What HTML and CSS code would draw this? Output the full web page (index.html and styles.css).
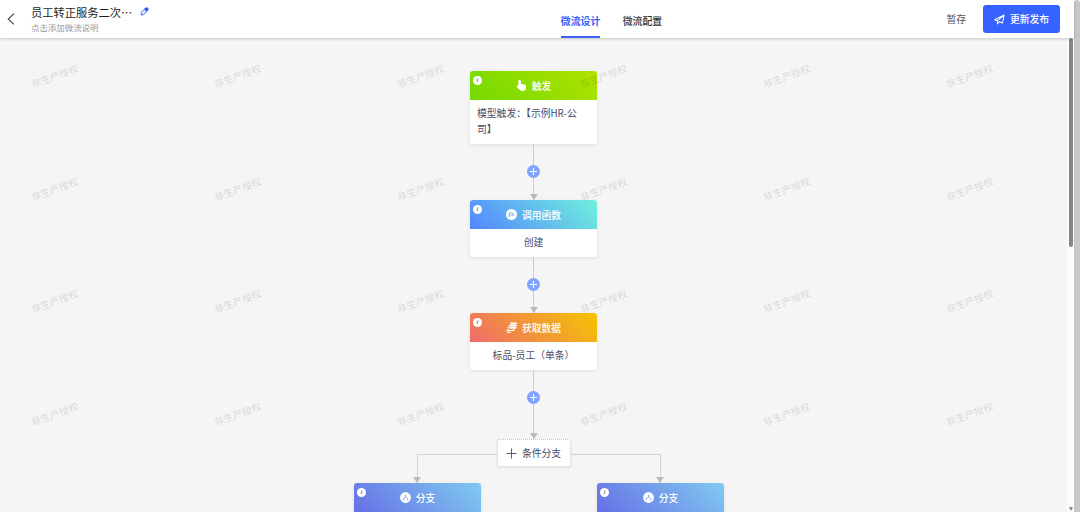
FILE: index.html
```html
<!DOCTYPE html>
<html lang="zh-CN">

<head>
    <meta charset="UTF-8">
    <meta name="viewport" content="width=device-width, initial-scale=1.0">
    <title>微流设计</title>
    <link rel="stylesheet" href="styles.css">
</head>

<body>
    <div class="app">
        <header class="header">
            <div class="header-left">
                <svg class="back" viewBox="0 0 8 12"><path d="M7 .7 1.2 6 7 11.3" /></svg>
                <div class="title-box">
                    <div class="title">
                        <span>员工转正服务二次⋯</span>
                        <svg class="edit" viewBox="0 0 10 10">
                            <path class="edit-body" d="M5.6 1.8 8.2 4.4 4.1 8.4 1.3 9 1.5 6Z" />
                            <path class="edit-tip" d="M4.6 2.2 7 .4Q7.5 0 8 .4L9.5 1.9Q10 2.4 9.5 3L7.2 5.6Z" />
                        </svg>
                    </div>
                    <div class="subtitle">点击添加微流说明</div>
                </div>
            </div>
            <nav class="tabs">
                <a class="tab active">微流设计</a>
                <a class="tab">微流配置</a>
            </nav>
            <div class="header-right">
                <span class="save">暂存</span>
                <button class="publish">
                    <svg class="plane" viewBox="0 0 12 12">
                        <path d="M11 1 .9 6.2 3.7 7.6 11 1 9.3 9.8 6 8.4M3.7 7.6V10.8L6 8.4" />
                    </svg>
                    <span>更新发布</span>
                </button>
            </div>
        </header>

        <div class="main">
            <div class="canvas">
                <div class="flow">
                    <div class="node">
                        <div class="node-head trigger">
                            <span class="info">i</span>
                            <svg class="node-icon" viewBox="0 0 12 12">
                                <path d="M2.6 1.6Q2.6 0 4 0T5.4 1.6V4.2L9.7 5.1Q11.3 5.6 11 7.2L10.4 10.3Q10 11.8 8.5 11.8H5.8Q4.8 11.8 4.2 11L.8 7.6Q.4 6.7 1.2 6.2 1.9 5.9 2.6 6.4Z" />
                            </svg>
                            <span>触发</span>
                        </div>
                        <div class="node-body text-left">模型触发：【示例HR-公司】</div>
                    </div>
                    <div class="connector"><span class="add"></span></div>
                    <div class="node">
                        <div class="node-head func">
                            <span class="info">i</span>
                            <span class="round-icon">fx</span>
                            <span>调用函数</span>
                        </div>
                        <div class="node-body">创建</div>
                    </div>
                    <div class="connector"><span class="add"></span></div>
                    <div class="node">
                        <div class="node-head data">
                            <span class="info">i</span>
                            <svg class="node-icon" viewBox="0 0 12 12">
                                <path d="M4.6 .6H11.8L11.2 7.4H4Z" />
                                <path class="cut" d="M4 2.8H11.6M3.8 5.1H11.4" />
                                <path class="pointer" d="M4.4 4H2.6M4 6.2H1.6M8.6 7.2V9.4H.4M3 7.8 1 9.6M1 11.3H5.4" />
                            </svg>
                            <span>获取数据</span>
                        </div>
                        <div class="node-body">标品-员工（单条）</div>
                    </div>
                    <div class="connector long"><span class="add"></span></div>
                </div>

                <div class="branch-row">
                    <div class="arm arm-left"></div>
                    <div class="branch-btn">
                        <svg class="plus" viewBox="0 0 11 11"><path d="M5.5 .5V10.5M.5 5.5H10.5" /></svg>
                        <span>条件分支</span>
                    </div>
                    <div class="arm arm-right"></div>
                </div>

                <div class="branches">
                    <div class="node">
                        <div class="node-head branch">
                            <span class="info">i</span>
                            <svg class="node-icon" viewBox="0 0 12 12">
                                <circle cx="6" cy="6" r="5.9" />
                                <path class="fork" d="M6 3V5.5M3.7 8.2V7L6 5.2 8.3 7V8.2M3 8.5H4.5M7.5 8.5H9" />
                            </svg>
                            <span>分支</span>
                        </div>
                    </div>
                    <div class="node">
                        <div class="node-head branch">
                            <span class="info">i</span>
                            <svg class="node-icon" viewBox="0 0 12 12">
                                <circle cx="6" cy="6" r="5.9" />
                                <path class="fork" d="M6 3V5.5M3.7 8.2V7L6 5.2 8.3 7V8.2M3 8.5H4.5M7.5 8.5H9" />
                            </svg>
                            <span>分支</span>
                        </div>
                    </div>
                </div>

                <div class="watermark">
                    <span>非生产授权</span><span>非生产授权</span><span>非生产授权</span><span>非生产授权</span><span>非生产授权</span><span>非生产授权</span>
                    <span>非生产授权</span><span>非生产授权</span><span>非生产授权</span><span>非生产授权</span><span>非生产授权</span><span>非生产授权</span>
                    <span>非生产授权</span><span>非生产授权</span><span>非生产授权</span><span>非生产授权</span><span>非生产授权</span><span>非生产授权</span>
                    <span>非生产授权</span><span>非生产授权</span><span>非生产授权</span><span>非生产授权</span><span>非生产授权</span><span>非生产授权</span>
                </div>
            </div>
            <div class="scrollbar">
                <div class="thumb"></div>
                <div class="scroll-down"></div>
            </div>
        </div>
    </div>
    <div class="page-scrollbar"></div>
</body>

</html>
```

FILE: styles.css
```css
* {
    box-sizing: border-box;
}

body {
    display: flex;
    height: 100vh;
    margin: 0;
    overflow: hidden;
    font-family: "Noto Sans CJK SC", sans-serif;
    font-size: 9.8px;
    color: #484b68;
    background-color: #fff;
}

svg {
    display: block;
    flex: none;
}

.app {
    flex: 1;
    display: flex;
    flex-direction: column;
    min-width: 0;
}

/* header */
.header {
    position: relative;
    z-index: 2;
    flex: none;
    display: grid;
    grid-template-columns: 1fr auto 1fr;
    height: 38px;
    padding-right: 14px;
    background-color: #fff;
    box-shadow: 0 1px 3px rgba(0, 0, 0, 0.2);
}

.header-left {
    display: flex;
    align-items: center;
    gap: 16px;
    padding-left: 7px;
}

.back {
    width: 8px;
    height: 12px;
    fill: none;
    stroke: #444;
    stroke-width: 1.1;
}

.title-box {
    padding-bottom: 1px;
}

.title {
    display: flex;
    align-items: center;
    gap: 8px;
    font-size: 11.25px;
    line-height: 16px;
    color: #1d1d1d;
}

.edit {
    width: 9px;
    height: 9px;
}

.edit-body {
    fill: #dfe6ff;
    stroke: #3a5cf5;
    stroke-width: 1;
}

.edit-tip {
    fill: #3a5cf5;
}

.subtitle {
    font-size: 8.45px;
    line-height: 14px;
    color: #999;
}

.tabs {
    display: flex;
    gap: 22.5px;
    padding-left: 163px;
}

.tab {
    height: 38px;
    padding-top: 14px;
    font-size: 9.85px;
    font-weight: 500;
    line-height: 15px;
    color: #333;
}

.tab.active {
    color: #3a62fa;
    font-weight: 700;
    border-bottom: 2px solid #3a62fa;
}

.header-right {
    display: flex;
    align-items: center;
    justify-content: flex-end;
    gap: 17px;
}

.save {
    color: #555;
}

.publish {
    display: flex;
    align-items: center;
    justify-content: center;
    gap: 5px;
    width: 77px;
    height: 28px;
    padding: 0;
    border: none;
    border-radius: 3px;
    background-color: #3662ff;
    color: #fff;
    font-family: inherit;
    font-size: 9.8px;
    font-weight: 500;
}

.plane {
    width: 11px;
    height: 11px;
    fill: none;
    stroke: #fff;
    stroke-width: 1.1;
    stroke-linejoin: round;
}

/* canvas */
.main {
    flex: 1;
    display: flex;
    min-height: 0;
}

.canvas {
    position: relative;
    flex: none;
    width: 1067px;
    padding-top: 33px;
    overflow: hidden;
    background-color: #f5f5f5;
}

.flow {
    display: flex;
    flex-direction: column;
    align-items: center;
}

.node {
    flex: none;
    width: 127px;
    border-radius: 3px;
    background-color: #fff;
    box-shadow: 0 1px 4px rgba(0, 0, 0, 0.09);
}

.node-head {
    position: relative;
    display: flex;
    align-items: center;
    justify-content: center;
    gap: 5px;
    height: 29px;
    border-radius: 3px 3px 0 0;
    color: #fff;
    font-weight: 500;
}

.trigger {
    background: linear-gradient(45deg, #74d900, #b0e200);
}

.func {
    background: linear-gradient(45deg, #5486ff, #6ff0dc);
}

.data {
    background: linear-gradient(45deg, #ee6c6c, #f5c400);
}

.branch {
    background: linear-gradient(45deg, #6670e6, #80caf0);
}

.info {
    position: absolute;
    top: 5px;
    left: 3px;
    width: 9px;
    height: 9px;
    border-radius: 50%;
    background-color: #fff;
    color: #888;
    font: italic bold 7px/9px "Liberation Serif", serif;
    text-align: center;
}

.node-icon {
    width: 11px;
    height: 11px;
    fill: #fff;
}

.node-icon .cut {
    fill: none;
    stroke: #f0924a;
    stroke-width: 0.5;
}

.node-icon .pointer {
    fill: none;
    stroke: #fff;
    stroke-width: 1.1;
}

.node-icon .fork {
    fill: none;
    stroke: #7398ea;
    stroke-width: 0.9;
}

.round-icon {
    width: 11px;
    height: 11px;
    border-radius: 50%;
    background-color: #fff;
    color: #5aa6f6;
    font: italic bold 7px/10px "Liberation Serif", serif;
    text-align: center;
}

.node-body {
    padding: 6px 7px 7px;
    line-height: 15px;
    text-align: center;
}

.node-body.text-left {
    padding-right: 12px;
    line-height: 15.5px;
    text-align: left;
}

.connector {
    display: flex;
    flex-direction: column;
    align-items: center;
    width: 13px;
    height: 56px;
    padding-top: 21px;
    background: linear-gradient(#ccc, #ccc) center / 1px 100% no-repeat;
}

.connector.long {
    height: 69px;
}

.connector::after {
    content: "";
    margin-top: auto;
    border: 4px solid transparent;
    border-top: 6px solid #bbb;
    border-bottom: none;
}

.add {
    width: 13px;
    height: 13px;
    border-radius: 50%;
    background:
        linear-gradient(#fff, #fff) center / 7px 1px no-repeat,
        linear-gradient(#fff, #fff) center / 1px 7px no-repeat,
        #82a4ff;
}

.branch-row {
    display: flex;
    padding-left: 413px;
}

.arm {
    display: flex;
    flex-direction: column;
    height: 29px;
    margin-top: 15px;
    background:
        linear-gradient(#d2d2d2, #d2d2d2) 4px 0 / 100% 1px no-repeat,
        linear-gradient(#d2d2d2, #d2d2d2) 4px 0 / 1px 100% no-repeat;
}

.arm::after {
    content: "";
    width: 0;
    margin-top: auto;
    border: 4px solid transparent;
    border-top: 6px solid #bbb;
    border-bottom: none;
}

.arm-left {
    width: 84px;
}

.arm-right {
    width: 93px;
    align-items: flex-end;
    background:
        linear-gradient(#d2d2d2, #d2d2d2) -4px 0 / 100% 1px no-repeat,
        linear-gradient(#d2d2d2, #d2d2d2) 89px 0 / 1px 100% no-repeat;
}

.branch-btn {
    display: flex;
    align-items: center;
    justify-content: center;
    gap: 5px;
    width: 74px;
    height: 28px;
    padding-right: 1px;
    border: 1px dotted #c8c8c8;
    border-radius: 2px;
    background-color: #fff;
    box-shadow: 0 1px 3px rgba(0, 0, 0, 0.08);
}

.plus {
    width: 11px;
    height: 11px;
    fill: none;
    stroke: #484b68;
    stroke-width: 0.9;
}

.branches {
    display: flex;
    gap: 116px;
    padding-left: 354px;
}

/* licence watermark, drawn over the nodes */
.watermark {
    position: absolute;
    top: -18px;
    left: -37.5px;
    display: grid;
    grid-template-columns: repeat(6, 183px);
    grid-auto-rows: 112.5px;
    place-items: center;
    color: rgba(0, 0, 0, 0.12);
    font-weight: 500;
    pointer-events: none;
}

.watermark span {
    transform: rotate(-20deg);
}

/* scrollbars */
.scrollbar {
    flex: 1;
    display: flex;
    flex-direction: column;
    align-items: center;
    justify-content: space-between;
    background-color: #fbfbfb;
}

.thumb {
    width: 4px;
    height: 209px;
    border-radius: 2px;
    background-color: #868686;
}

.scroll-down {
    margin-bottom: 1px;
    border: 2.5px solid transparent;
    border-top: 4px solid #888;
    border-bottom: none;
}

.page-scrollbar {
    flex: none;
    width: 6px;
    border-radius: 3px 3px 0 0;
    background-color: #c8c8c8;
}
```
